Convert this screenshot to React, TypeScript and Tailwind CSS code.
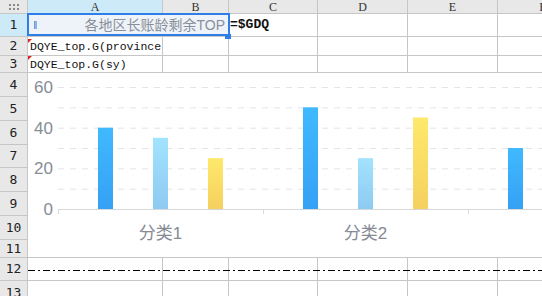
import React from 'react';

const line = 'border-[#c6c6c6]';
const headFont = { fontFamily: '"Liberation Serif", serif' };
const rowFont = { fontFamily: '"DejaVu Sans Mono", monospace' };
const monoFont = { fontFamily: '"Liberation Mono", monospace' };

// widths of columns A..E, F fills the rest
const colWidths = ['w-[135px]', 'w-[66px]', 'w-[89px]', 'w-[90px]', 'w-[90px]'];

const RowHead: React.FC<{ n: number; h: string; active?: boolean }> = ({ n, h, active }) => (
  <div
    className={`${h} w-[28px] shrink-0 flex items-center justify-center border-r border-b ${line} text-[13px] text-[#222] ${
      active ? 'bg-[#cdeaf8]' : 'bg-[#e8e8e8]'
    }`}
    style={rowFont}
  >
    {n}
  </div>
);

const EmptyCells: React.FC<{ from: number }> = ({ from }) => (
  <>
    {colWidths.slice(from).map((w, i) => (
      <div key={i} className={`${w} shrink-0 border-r border-b ${line}`} />
    ))}
    <div className={`flex-1 border-b ${line}`} />
  </>
);

const CommentMark: React.FC<{ top: string }> = ({ top }) => (
  <svg className={`absolute left-0 ${top}`} width="4" height="4" viewBox="0 0 4 4">
    <polygon points="0,0 4,0 0,4" fill="#e02424" />
  </svg>
);

// chart geometry
const AXIS_Y = 136;
const UNIT = 122 / 60;
const X0 = 30;
const CAT_W = 205;
const series = [
  { id: 'g1', from: '#40b9fe', to: '#35a1f5', offset: 40, values: [40, 50, 30] },
  { id: 'g2', from: '#a2e3fe', to: '#8dcaf1', offset: 95, values: [35, 25, 0] },
  { id: 'g3', from: '#fee96b', to: '#f5d05f', offset: 150, values: [25, 45, 0] },
];

const Chart: React.FC = () => (
  <svg width="100%" height="184" className="block">
    <defs>
      {series.map(s => (
        <linearGradient key={s.id} id={s.id} x1="0" y1="0" x2="0" y2="1">
          <stop offset="0" stopColor={s.from} />
          <stop offset="1" stopColor={s.to} />
        </linearGradient>
      ))}
    </defs>
    {[10, 20, 30, 40, 50, 60].map(v => (
      <line
        key={v}
        x1={X0}
        x2={600}
        y1={AXIS_Y - v * UNIT + 0.5}
        y2={AXIS_Y - v * UNIT + 0.5}
        stroke="#e3e3ec"
        strokeDasharray="6 6"
      />
    ))}
    {[0, 20, 40, 60].map(v => (
      <text
        key={v}
        x={25}
        y={AXIS_Y - v * UNIT + 6}
        textAnchor="end"
        fontSize="17"
        fill="#878c96"
        fontFamily='"Liberation Sans", sans-serif'
      >
        {v}
      </text>
    ))}
    {series.map(s =>
      s.values.map((v, ci) =>
        v > 0 ? (
          <rect
            key={s.id + ci}
            x={X0 + ci * CAT_W + s.offset}
            y={AXIS_Y - v * UNIT}
            width={15}
            height={v * UNIT}
            fill={`url(#${s.id})`}
          />
        ) : null
      )
    )}
    <line x1={X0} x2={600} y1={AXIS_Y + 0.5} y2={AXIS_Y + 0.5} stroke="#d8d8d8" />
    {[0, 1, 2].map(i => (
      <line
        key={i}
        x1={X0 + i * CAT_W + 0.5}
        x2={X0 + i * CAT_W + 0.5}
        y1={AXIS_Y}
        y2={AXIS_Y + 5}
        stroke="#d8d8d8"
      />
    ))}
    {['分类1', '分类2'].map((t, i) => (
      <text
        key={t}
        x={X0 + i * CAT_W + CAT_W / 2}
        y={166}
        textAnchor="middle"
        fontSize="17"
        fill="#858a94"
        fontFamily='"Liberation Sans", "Noto Sans CJK SC", sans-serif'
      >
        {t}
      </text>
    ))}
  </svg>
);

const App: React.FC = () => {
  return (
    <div className="w-[542px] h-[296px] overflow-hidden bg-white flex flex-col">
      {/* Column headers */}
      <div className="h-[14px] flex shrink-0 text-[12px] leading-none text-[#333]" style={headFont}>
        <div className={`w-[28px] shrink-0 bg-[#e8e8e8] border-r border-b ${line} flex flex-col items-center justify-center gap-[2px]`}>
          <div className="flex gap-[2px]">
            <span className="w-[2px] h-[2px] bg-[#8a8a8a]" />
            <span className="w-[2px] h-[2px] bg-[#8a8a8a]" />
            <span className="w-[2px] h-[2px] bg-[#8a8a8a]" />
          </div>
          <div className="flex gap-[2px]">
            <span className="w-[2px] h-[2px] bg-[#8a8a8a]" />
            <span className="w-[2px] h-[2px] bg-[#8a8a8a]" />
            <span className="w-[2px] h-[2px] bg-[#8a8a8a]" />
          </div>
        </div>
        <div className={`w-[135px] shrink-0 bg-[#cdeaf8] border-r border-b ${line} flex items-center justify-center`}>A</div>
        <div className={`w-[66px] shrink-0 bg-[#e8e8e8] border-r border-b ${line} flex items-center justify-center`}>B</div>
        <div className={`w-[89px] shrink-0 bg-[#e8e8e8] border-r border-b ${line} flex items-center justify-center`}>C</div>
        <div className={`w-[90px] shrink-0 bg-[#e8e8e8] border-r border-b ${line} flex items-center justify-center`}>D</div>
        <div className={`w-[90px] shrink-0 bg-[#e8e8e8] border-r border-b ${line} flex items-center justify-center`}>E</div>
        <div className={`w-[90px] shrink-0 bg-[#e8e8e8] border-r border-b ${line} flex items-center justify-center`}>F</div>
      </div>

      {/* Row 1: merged A1:B1 title */}
      <div className="h-[23px] flex shrink-0">
        <RowHead n={1} h="h-[23px]" active />
        <div className={`relative w-[201px] shrink-0 bg-[#eef3f9] border-r border-b ${line} flex items-center justify-between pl-[6px] pr-[3px]`}>
          <span className="w-[3px] h-[8px] bg-[#8fb4ec] border-l border-[#6f9be0]" />
          <span className="text-[14px] text-[#8a8f99]" style={{ fontFamily: '"Liberation Sans", "Noto Sans CJK SC", sans-serif' }}>
            各地区长账龄剩余TOP
          </span>
          <div className="absolute -left-px -top-px w-[203px] h-[23px] border-2 border-[#2f7ee8] pointer-events-none" />
          <div className="absolute left-[197px] top-[20px] w-[6px] h-[5px] bg-[#2f7ee8]" />
        </div>
        <div className={`w-[89px] shrink-0 border-r border-b ${line} flex items-center pl-[1px] text-[13px] font-bold text-[#111]`} style={monoFont}>
          =$GDQ
        </div>
        <EmptyCells from={3} />
      </div>

      {/* Row 2 */}
      <div className="h-[19px] flex shrink-0">
        <RowHead n={2} h="h-[19px]" />
        <div className={`relative w-[135px] shrink-0 border-r border-b ${line} overflow-hidden whitespace-nowrap flex items-center pt-[2px] pl-[2px] text-[11.5px] text-[#111]`} style={monoFont}>
          <CommentMark top="top-[2px]" />
          DQYE_top.G(province)
        </div>
        <EmptyCells from={1} />
      </div>

      {/* Row 3 */}
      <div className="h-[17px] flex shrink-0">
        <RowHead n={3} h="h-[17px]" />
        <div className={`relative w-[135px] shrink-0 border-r border-b ${line} overflow-hidden whitespace-nowrap flex items-center pt-[1px] pl-[2px] text-[11.5px] text-[#111]`} style={monoFont}>
          <CommentMark top="top-0" />
          DQYE_top.G(sy)
        </div>
        <EmptyCells from={1} />
      </div>

      {/* Rows 4-11 with the chart laid over the cells */}
      <div className="flex shrink-0">
        <div className="flex flex-col">
          <RowHead n={4} h="h-[24px]" />
          <RowHead n={5} h="h-[24px]" />
          <RowHead n={6} h="h-[24px]" />
          <RowHead n={7} h="h-[23px]" />
          <RowHead n={8} h="h-[24px]" />
          <RowHead n={9} h="h-[24px]" />
          <RowHead n={10} h="h-[24px]" />
          <RowHead n={11} h="h-[18px]" />
        </div>
        <div className={`flex-1 h-[185px] border-b ${line} bg-white overflow-hidden`}>
          <Chart />
        </div>
      </div>

      {/* Row 12 with dash-dot border */}
      <div className="relative h-[23px] flex shrink-0">
        <RowHead n={12} h="h-[23px]" />
        <EmptyCells from={0} />
        <svg className="absolute left-[28px] top-[12px] w-[514px] h-[1px]">
          <line x1="0" x2="514" y1="0.5" y2="0.5" stroke="#000" strokeDasharray="7 3 2 3" />
        </svg>
      </div>

      {/* Row 13 */}
      <div className="h-[24px] flex shrink-0">
        <RowHead n={13} h="h-[24px]" />
        <EmptyCells from={0} />
      </div>
    </div>
  );
};

export default App;
